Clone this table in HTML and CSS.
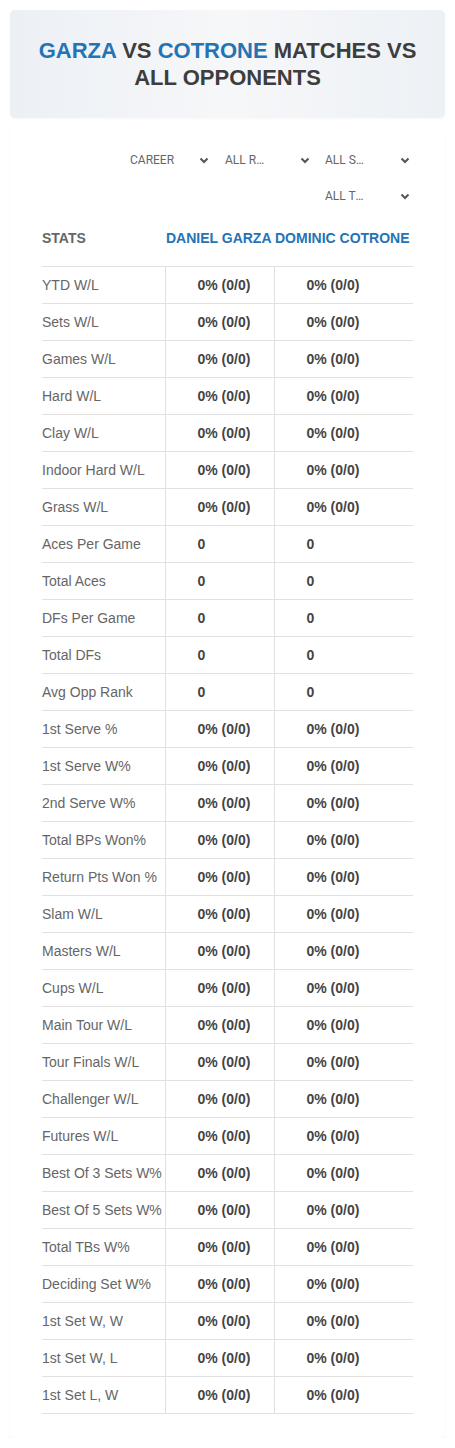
FILE: index.html
```html
<!DOCTYPE html>
<html>
<head>
<meta charset="utf-8">
<link rel="stylesheet" href="styles.css">
</head>
<body>
<div class="page">
  <div class="hero">
    <h1 class="hero-title"><span class="blue">GARZA</span> VS <span class="blue">COTRONE</span> MATCHES VS ALL OPPONENTS</h1>
  </div>
  <div class="card">
    <div class="filters">
      <div class="select select-first"><span class="select-text">CAREER</span><svg class="chev" width="10" height="7" viewBox="0 0 10 7"><path d="M1.5 1.5 L5 5 L8.5 1.5" fill="none" stroke="#555" stroke-width="2"/></svg></div>
      <div class="select"><span class="select-text">ALL ROUNDS</span><svg class="chev" width="10" height="7" viewBox="0 0 10 7"><path d="M1.5 1.5 L5 5 L8.5 1.5" fill="none" stroke="#555" stroke-width="2"/></svg></div>
      <div class="select"><span class="select-text">ALL SURFACES</span><svg class="chev" width="10" height="7" viewBox="0 0 10 7"><path d="M1.5 1.5 L5 5 L8.5 1.5" fill="none" stroke="#555" stroke-width="2"/></svg></div>
      <div class="select"><span class="select-text">ALL TOURNAMENTS</span><svg class="chev" width="10" height="7" viewBox="0 0 10 7"><path d="M1.5 1.5 L5 5 L8.5 1.5" fill="none" stroke="#555" stroke-width="2"/></svg></div>
    </div>
    <table class="stats">
      <colgroup><col class="c1"><col class="c2"><col class="c3"></colgroup>
      <thead>
        <tr><th class="h-stat">STATS</th><th class="h-player">DANIEL GARZA</th><th class="h-player">DOMINIC COTRONE</th></tr>
      </thead>
      <tbody>
        <tr><td>YTD W/L</td><td>0% (0/0)</td><td>0% (0/0)</td></tr>
        <tr><td>Sets W/L</td><td>0% (0/0)</td><td>0% (0/0)</td></tr>
        <tr><td>Games W/L</td><td>0% (0/0)</td><td>0% (0/0)</td></tr>
        <tr><td>Hard W/L</td><td>0% (0/0)</td><td>0% (0/0)</td></tr>
        <tr><td>Clay W/L</td><td>0% (0/0)</td><td>0% (0/0)</td></tr>
        <tr><td>Indoor Hard W/L</td><td>0% (0/0)</td><td>0% (0/0)</td></tr>
        <tr><td>Grass W/L</td><td>0% (0/0)</td><td>0% (0/0)</td></tr>
        <tr><td>Aces Per Game</td><td>0</td><td>0</td></tr>
        <tr><td>Total Aces</td><td>0</td><td>0</td></tr>
        <tr><td>DFs Per Game</td><td>0</td><td>0</td></tr>
        <tr><td>Total DFs</td><td>0</td><td>0</td></tr>
        <tr><td>Avg Opp Rank</td><td>0</td><td>0</td></tr>
        <tr><td>1st Serve %</td><td>0% (0/0)</td><td>0% (0/0)</td></tr>
        <tr><td>1st Serve W%</td><td>0% (0/0)</td><td>0% (0/0)</td></tr>
        <tr><td>2nd Serve W%</td><td>0% (0/0)</td><td>0% (0/0)</td></tr>
        <tr><td>Total BPs Won%</td><td>0% (0/0)</td><td>0% (0/0)</td></tr>
        <tr><td>Return Pts Won %</td><td>0% (0/0)</td><td>0% (0/0)</td></tr>
        <tr><td>Slam W/L</td><td>0% (0/0)</td><td>0% (0/0)</td></tr>
        <tr><td>Masters W/L</td><td>0% (0/0)</td><td>0% (0/0)</td></tr>
        <tr><td>Cups W/L</td><td>0% (0/0)</td><td>0% (0/0)</td></tr>
        <tr><td>Main Tour W/L</td><td>0% (0/0)</td><td>0% (0/0)</td></tr>
        <tr><td>Tour Finals W/L</td><td>0% (0/0)</td><td>0% (0/0)</td></tr>
        <tr><td>Challenger W/L</td><td>0% (0/0)</td><td>0% (0/0)</td></tr>
        <tr><td>Futures W/L</td><td>0% (0/0)</td><td>0% (0/0)</td></tr>
        <tr><td>Best Of 3 Sets W%</td><td>0% (0/0)</td><td>0% (0/0)</td></tr>
        <tr><td>Best Of 5 Sets W%</td><td>0% (0/0)</td><td>0% (0/0)</td></tr>
        <tr><td>Total TBs W%</td><td>0% (0/0)</td><td>0% (0/0)</td></tr>
        <tr><td>Deciding Set W%</td><td>0% (0/0)</td><td>0% (0/0)</td></tr>
        <tr><td>1st Set W, W</td><td>0% (0/0)</td><td>0% (0/0)</td></tr>
        <tr><td>1st Set W, L</td><td>0% (0/0)</td><td>0% (0/0)</td></tr>
        <tr><td>1st Set L, W</td><td>0% (0/0)</td><td>0% (0/0)</td></tr>
      </tbody>
    </table>
  </div>
</div>
</body>
</html>
```

FILE: styles.css
```css
html, body {
  margin: 0;
  padding: 0;
  background: #ffffff;
}
body {
  font-family: "Liberation Sans", Arial, sans-serif;
  color: #444;
}
.page {
  padding: 10px 10px 0 10px;
}
.hero {
  height: 108px;
  border-radius: 5px;
  background: linear-gradient(90deg, #ecf0f5 0%, #f6f7f9 50%, #edf1f5 100%);
  box-shadow: 0 1px 2px rgba(0,0,0,0.03);
  display: flex;
  align-items: center;
  justify-content: center;
}
.hero-title {
  margin: 0;
  padding: 0 20px;
  font-size: 22px;
  line-height: 27px;
  font-weight: 700;
  text-align: center;
  color: #3d3d3d;
}
.blue {
  color: #2474b5;
}
.card {
  margin-top: 10px;
  padding: 14px 32px 24px 32px;
  background: #fff;
  border-radius: 4px;
  box-shadow: 0 1px 2px rgba(0,0,0,0.07);
}
.filters {
  display: flex;
  flex-wrap: wrap;
  justify-content: flex-end;
  column-gap: 5px;
  margin-bottom: 6px;
}
.select {
  width: 95px;
  height: 36px;
  box-sizing: border-box;
  padding: 0 3px 0 7px;
  display: flex;
  align-items: center;
  justify-content: space-between;
  font-family: Roboto, "Liberation Sans", sans-serif;
  font-size: 12px;
  color: #666;
}
.select-first {
  padding-left: 12px;
  padding-right: 4px;
}
.select-text {
  width: 46px;
  white-space: nowrap;
  overflow: hidden;
  text-overflow: ellipsis;
}
.chev {
  display: block;
}
.stats {
  width: 100%;
  border-collapse: collapse;
  table-layout: fixed;
  font-size: 14px;
}
.c1 { width: 123px; }
.c2 { width: 109px; }
.c3 { width: 139px; }
.stats th {
  height: 46px;
  padding: 0 0 0 1px;
  font-size: 14px;
  line-height: 36px;
  font-weight: 700;
  text-align: left;
  white-space: nowrap;
  vertical-align: top;
}
.stats th.h-stat {
  color: #666;
  padding-left: 0;
}
.stats th.h-player {
  color: #2474b5;
}
.stats td {
  height: 36px;
  padding: 0 0 0 32px;
  border-top: 1px solid #e1e1e1;
  border-bottom: 1px solid #e1e1e1;
  border-left: 1px solid #e1e1e1;
  font-weight: 700;
  color: #444;
  white-space: nowrap;
}
.stats td:first-child {
  padding-left: 0;
  border-left: none;
  font-weight: 400;
  color: #666;
}
```
